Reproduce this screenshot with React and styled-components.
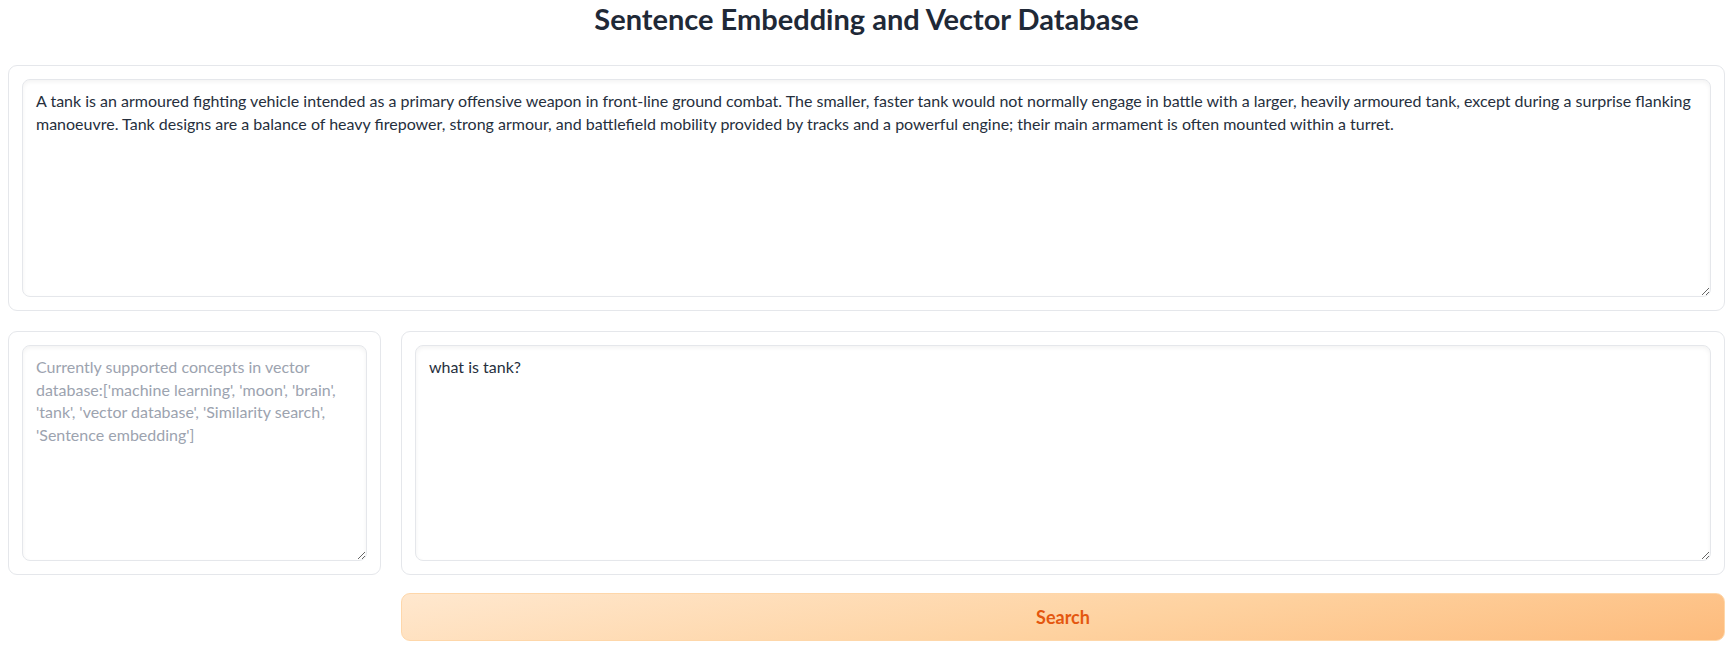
import React from 'react'
import styled, { createGlobalStyle } from 'styled-components'

const GlobalStyle = createGlobalStyle`
    html, body {
        margin: 0;
        padding: 0;
        background: #ffffff;
    }
    body {
        font-family: Lato, "Noto Sans", sans-serif;
        color: #1f2937;
    }
`

const Page = styled.div`
    display: flex;
    flex-direction: column;
    gap: 20px;
    padding: 0 7px 0 8px;
    box-sizing: border-box;
    width: 1732px;
`

const Title = styled.h1`
    margin: 0;
    height: 45px;
    text-align: center;
    font-size: 29px;
    line-height: 38px;
    font-weight: 700;
    color: #1f2937;
`

const Row = styled.div`
    display: grid;
    grid-template-columns: ${props => props.cols || '1fr'};
    gap: 20px;
`

const Block = styled.div`
    border: 1px solid #e5e7eb;
    border-radius: 9px;
    padding: 13px;
    background: #ffffff;
    box-sizing: border-box;
    display: flex;
`

const TextBox = styled.textarea`
    flex: 1;
    height: ${props => props.h}px;
    box-sizing: border-box;
    margin: 0;
    padding: 10px 13px;
    border: 1px solid #e5e7eb;
    border-radius: 8px;
    box-shadow: inset 0 2px 4px rgba(0, 0, 0, 0.05);
    background: #ffffff;
    font-family: Lato, "Noto Sans", sans-serif;
    font-size: 16px;
    line-height: 22.5px;
    color: #262f3d;
    outline: none;
    resize: vertical;

    &::placeholder {
        color: #9ca3af;
    }
`

const Spacer = styled.div``

const SearchButton = styled.button`
    height: 48px;
    margin-top: -2px;
    border: 1px solid #fed7aa;
    border-radius: 9px;
    background: linear-gradient(170deg, #ffe8cf 0%, #fed2a0 55%, #fdbb7c 100%);
    color: #e4570f;
    font-family: Lato, "Noto Sans", sans-serif;
    font-size: 18px;
    font-weight: 700;
    cursor: pointer;
`

const passage = "A tank is an armoured fighting vehicle intended as a primary offensive weapon in front-line ground combat. The smaller, faster tank would not normally engage in battle with a larger, heavily armoured tank, except during a surprise flanking manoeuvre. Tank designs are a balance of heavy firepower, strong armour, and battlefield mobility provided by tracks and a powerful engine; their main armament is often mounted within a turret."

const concepts = "Currently supported concepts in vector database:['machine learning', 'moon', 'brain', 'tank', 'vector database', 'Similarity search', 'Sentence embedding']"

export default function App() {
    return (
        <>
            <GlobalStyle />
            <Page>
                <Title>Sentence Embedding and Vector Database</Title>
                <Block>
                    <TextBox h={218} defaultValue={passage} />
                </Block>
                <Row cols="373px 1fr">
                    <Block>
                        <TextBox h={216} placeholder={concepts} />
                    </Block>
                    <Block>
                        <TextBox h={216} defaultValue="what is tank?" />
                    </Block>
                </Row>
                <Row cols="373px 1fr">
                    <Spacer />
                    <SearchButton>Search</SearchButton>
                </Row>
            </Page>
        </>
    )
}
